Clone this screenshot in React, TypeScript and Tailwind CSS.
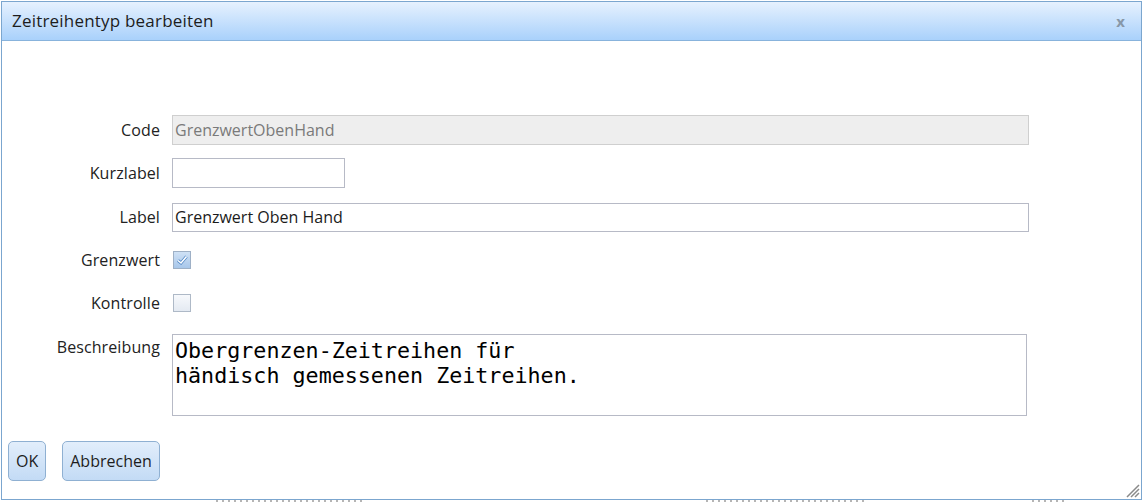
import React from "react";

const sans = "font-['Open_Sans','Noto_Sans',sans-serif]";

function Row({ label, children, top = false, h = "h-[30px]" }: { label: string; children: React.ReactNode; top?: boolean; h?: string }) {
  return (
    <div className={`flex ${top ? "items-start" : "items-center"} ${h}`}>
      <div className={`w-[158px] shrink-0 text-right text-[16px] tracking-[0.1px] text-[#222] ${top ? "pt-[1px]" : ""}`}>{label}</div>
      <div className="ml-[12px] flex-1 flex items-center">{children}</div>
    </div>
  );
}

export default function App() {
  return (
    <div className={`w-[1144px] h-[502px] bg-white relative overflow-hidden ${sans}`}>
      <div className="absolute left-[216px] top-[500px] w-[150px] h-[2px] bg-[repeating-linear-gradient(90deg,#b5b5b5_0_2px,transparent_2px_6px)]" />
      <div className="absolute left-[706px] top-[500px] w-[160px] h-[2px] bg-[repeating-linear-gradient(90deg,#b5b5b5_0_2px,transparent_2px_6px)]" />
      <div className="absolute left-[1032px] top-[500px] w-[36px] h-[2px] bg-[repeating-linear-gradient(90deg,#b5b5b5_0_2px,transparent_2px_6px)]" />
      <div className="absolute left-[1px] top-[1px] w-[1141px] h-[499px] border border-[#7ba6cf] bg-white flex flex-col">
        <div className="h-[39px] shrink-0 bg-gradient-to-b from-[#e6f1fe] to-[#a9d1fb] border-b border-[#88b3dc] flex items-center px-[10px]">
          <span className="text-[17px] text-[#1d1d1d] tracking-[0.2px]">Zeitreihentyp bearbeiten</span>
          <span className="ml-auto mr-[6px] text-[15px] font-bold text-[#8797a8] leading-none">x</span>
        </div>
        <div className="flex-1 flex flex-col pt-[74px] pr-[112px]">
          <Row label="Code">
            <div className="h-[30px] w-full bg-[#eeeeee] border border-[#cfcfcf] px-[2px] flex items-center text-[16px] text-[#7a7a7a]">GrenzwertObenHand</div>
          </Row>
          <div className="h-[13px]" />
          <Row label="Kurzlabel">
            <div className="h-[30px] w-[173px] bg-white border border-[#b7bac6]" />
          </Row>
          <div className="h-[14px]" />
          <Row label="Label">
            <div className="h-[29px] w-full bg-white border border-[#b7bac6] px-[2px] flex items-center text-[16px] text-[#1b1b1b]">Grenzwert Oben Hand</div>
          </Row>
          <div className="h-[13px]" />
          <Row label="Grenzwert">
            <div className="ml-[1px] w-[18px] h-[18px] border border-[#9eb0c6] bg-gradient-to-b from-[#cfe1f5] to-[#a8c7ea] flex items-center justify-center">
              <svg width="12" height="12" viewBox="0 0 12 12">
                <path d="M2 6.5 L5 9 L10.5 2.5" fill="none" stroke="#4f86c6" strokeWidth="3" />
                <path d="M2 6.5 L5 9 L10.5 2.5" fill="none" stroke="#ffffff" strokeWidth="1.6" />
              </svg>
            </div>
          </Row>
          <div className="h-[13px]" />
          <Row label="Kontrolle">
            <div className="ml-[1px] w-[18px] h-[18px] border border-[#aeb9c7] bg-gradient-to-b from-[#f7f9fc] to-[#e4eaf2]" />
          </Row>
          <div className="h-[16px]" />
          <Row label="Beschreibung" top h="h-[82px]">
            <div className="h-[82px] w-[855px] border border-[#b7bac6] bg-white px-[2px] pt-[3px] font-['DejaVu_Sans_Mono',monospace] text-[21.7px] leading-[25px] text-black whitespace-pre">
              {"Obergrenzen-Zeitreihen für\nhändisch gemessenen Zeitreihen."}
            </div>
          </Row>
          <div className="flex gap-[16px] pl-[6px] mt-[25px]">
            <button className="h-[40px] px-[7px] rounded-[5px] border border-[#8fb0d2] bg-gradient-to-b from-[#e2eefb] to-[#c3dbf5] text-[16px] text-[#1d1d1d]">OK</button>
            <button className="h-[40px] px-[7px] rounded-[5px] border border-[#8fb0d2] bg-gradient-to-b from-[#e2eefb] to-[#c3dbf5] text-[16px] text-[#1d1d1d]">Abbrechen</button>
          </div>
        </div>
        <svg className="absolute right-[1px] bottom-[1px]" width="16" height="16" viewBox="0 0 16 16">
          <path d="M15 3 L3 15 M15 7 L7 15 M15 11 L11 15" stroke="#8a8a8a" strokeWidth="1.5" />
        </svg>
      </div>
    </div>
  );
}
